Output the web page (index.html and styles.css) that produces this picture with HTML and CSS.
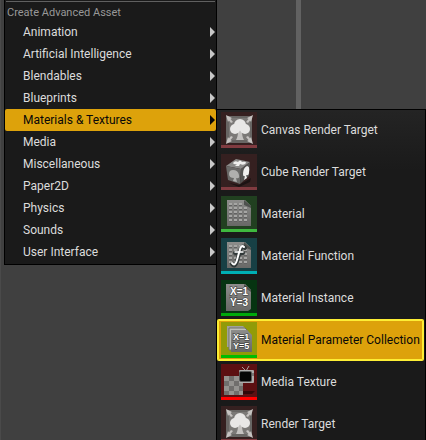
FILE: index.html
```html
<!DOCTYPE html>
<html lang="en">
<head>
<meta charset="utf-8">
<title>Create Advanced Asset</title>
<link rel="stylesheet" href="styles.css">
</head>
<body>
<svg class="defs" aria-hidden="true">
  <defs>
    <linearGradient id="metal" x1="0" y1="0" x2="0" y2="1">
      <stop offset="0" stop-color="#8d8d8b"/><stop offset="1" stop-color="#686866"/>
    </linearGradient>
    <pattern id="dots" x="7" y="6" width="5" height="4" patternUnits="userSpaceOnUse">
      <rect x="1" y="1" width="3" height="2" fill="#a6a6a4"/>
      <rect x="1" y="3" width="3" height="1" fill="#626262"/>
    </pattern>
    <symbol id="target" viewBox="0 0 36 33">
      <rect x="5" y="4" width="26" height="27" fill="#686664"/>
      <rect x="8" y="6" width="21" height="22" fill="#7b7977"/>
      <g fill="#c6c3c1">
        <path d="M5 3L11 6L9.500 7L12 10L10 11L8 8.500L7 10Z"/>
        <path d="M32 3L26 6L27.500 7L25 10L27 11L29 8.500L30 10Z"/>
        <path d="M5 32L11 29L9.500 28L12 25L10 24L8 26.500L7 25Z"/>
        <path d="M32 32L26 29L27.500 28L25 25L27 24L29 26.500L30 25Z"/>
      </g>
      <path d="M17 19H21Q21 25 23 28H15Q17 25 17 19Z" fill="#c4c2c0"/>
      <g fill="#e8e7e6">
        <circle cx="19" cy="13" r="6"/>
        <circle cx="14" cy="17" r="5"/>
        <circle cx="24" cy="17" r="5"/>
      </g>
    </symbol>
    <symbol id="plate" viewBox="0 0 36 33">
      <path d="M6 4H24L30 10V30H6Z" fill="url(#metal)"/>
      <path d="M7 6H22V10H27V26H7Z" fill="url(#dots)"/>
      <path d="M23 4L30 10V12L23 9Z" fill="#4e514e"/>
    </symbol>
  </defs>
</svg>
<main class="desk">
  <nav class="menu" aria-label="Create Advanced Asset">
    <h1 class="heading">Create Advanced Asset</h1>
    <button class="entry">Animation</button>
    <button class="entry">Artificial Intelligence</button>
    <button class="entry">Blendables</button>
    <button class="entry">Blueprints</button>
    <button class="entry open" aria-expanded="true">Materials &amp; Textures</button>
    <button class="entry">Media</button>
    <button class="entry">Miscellaneous</button>
    <button class="entry">Paper2D</button>
    <button class="entry">Physics</button>
    <button class="entry">Sounds</button>
    <button class="entry">User Interface</button>
  </nav>
  <nav class="submenu" aria-label="Materials &amp; Textures">
    <button class="asset"><svg class="icon maroon" viewBox="0 0 36 33"><use href="#target" width="36" height="33"/></svg>Canvas Render Target</button>
    <button class="asset">
      <svg class="icon maroon" viewBox="0 0 36 33">
        <path d="M8 29L18 31L30 24L29 28L18 33Z" fill="#1c1313"/>
        <path d="M5 12L15 5L29 8L20 15Z" fill="#8a8a88"/>
        <path d="M5 12L20 15L19 30L7 26Z" fill="#6a6a68"/>
        <path d="M20 15L29 8L28 22L19 30Z" fill="#545452"/>
        <path d="M12 9Q14 6 17 8Q19 5 21 8Q25 7 25 9Q23 12 19 10L18 12L14 12L16 10Q13 11 12 9Z" fill="#efefed"/>
        <path d="M8 20Q8 16 12 16Q17 16 18 21Q19 25 15 24L16 28L12 27L13 24Q8 24 8 20Z" fill="#b0b0ae"/>
        <path d="M22 20Q22 14 26 12Q29 12 28 18Q28 22 25 21L26 24L23 26L24 22Q22 23 22 20Z" fill="#f0f0ee"/>
      </svg>Cube Render Target</button>
    <button class="asset"><svg class="icon green" viewBox="0 0 36 33"><use href="#plate" width="36" height="33"/></svg>Material</button>
    <button class="asset">
      <svg class="icon teal" viewBox="0 0 36 33">
        <use href="#plate" width="36" height="33"/>
        <g fill="none" stroke-linecap="round">
          <path d="M24 10Q21 6 19 13L16 23Q14 30 11 26M14 15H22" stroke="#303838" stroke-width="4"/>
          <path d="M23 9Q20 6 18.500 13L16 22Q14 29 11 25" stroke="#fff" stroke-width="2"/>
          <path d="M14 14H22" stroke="#fff" stroke-width="1.500"/>
        </g>
      </svg>Material Function</button>
    <button class="asset">
      <svg class="icon forest" viewBox="0 0 36 33">
        <path d="M5 4H24L30 10V29L27 31H5Z" fill="url(#metal)"/>
        <path d="M23 4L30 10V12L23 7Z" fill="#4e514e"/>
        <g class="formula"><text x="9" y="15">X=1</text><text x="9" y="26">Y=3</text></g>
      </svg>Material Instance</button>
    <button class="asset selected">
      <svg class="icon olive" viewBox="0 0 36 33">
        <path d="M6 4H22L25 7V25H6Z" fill="#a0a19a"/>
        <path d="M8 6H24L27 9V28H8Z" fill="#c0c1ba" stroke="#71736c"/>
        <path d="M10 8H26L31 13V30H10Z" fill="url(#metal)"/>
        <g class="formula small"><text x="12" y="18">X=1</text><text x="12" y="27">Y=5</text></g>
      </svg>Material Parameter Collection</button>
    <button class="asset">
      <svg class="icon red" viewBox="0 0 36 33">
        <path d="M20 27H34L31 30H20Z" fill="#300709"/>
        <rect x="3" y="12" width="19" height="19" fill="#706e6c"/>
        <path d="M3 12h5v5h-5zM13 12h5v5h-5zM8 17h5v5h-5zM18 17h4v5h-4zM3 22h5v5h-5zM13 22h5v5h-5zM8 27h5v4h-5zM18 27h4v4h-4z" fill="#94928f"/>
        <path d="M25 7L21 3M25 7L28 2" stroke="#a5a09e" fill="none"/>
        <rect x="18" y="6" width="15" height="13" rx="1" fill="#aeacab"/>
        <rect x="18" y="7" width="13" height="11" rx="2" fill="#555"/>
        <rect x="19" y="8" width="11" height="9" rx="1" fill="#050505"/>
        <path d="M32 9V12" stroke="#444"/>
      </svg>Media Texture</button>
    <button class="asset"><svg class="icon maroon" viewBox="0 0 36 33"><use href="#target" width="36" height="33"/></svg>Render Target</button>
  </nav>
</main>
</body>
</html>
```
FILE: styles.css
```css
* { box-sizing: border-box; }

body {
  margin: 0;
  background: #404040;
  font-family: Roboto, "Liberation Sans", sans-serif;
  font-size: 12px;
  line-height: 22px;
  color: #dcdcdc;
}

.defs { position: absolute; width: 0; height: 0; }

.desk {
  display: flex;
  align-items: flex-start;
  height: 100vh;
  padding-left: 4px;
  overflow: hidden;
  background:
    linear-gradient(#4a4a4a, #4a4a4a) 0 0 / 1px 100% no-repeat,
    linear-gradient(#626262, #626262) 296px 0 / 5px 100% no-repeat;
}

.menu {
  flex: 0 0 213px;
  padding: 1px 0;
  border: solid #000;
  border-width: 0 1px 1px;
  background: #1a1a1a;
}

.heading {
  margin: 0 1px;
  padding: 3px 0 0 1px;
  border-top: 1px solid #606060;
  font-size: 11px;
  font-weight: 400;
  line-height: 16px;
  color: #989898;
}

button {
  display: flex;
  align-items: center;
  width: 100%;
  margin: 0;
  border: 0;
  background: none;
  font: inherit;
  color: inherit;
  text-align: left;
  white-space: nowrap;
}

.entry {
  justify-content: space-between;
  height: 22px;
  padding: 0 1px 0 18px;
}

.entry::after {
  content: "";
  border: solid transparent;
  border-width: 5px 0 5px 5px;
  border-left-color: #c8c8c8;
}

.open { border-radius: 2px; background: #dda20b; color: #080808; }
.open::after { border-left-color: #080808; }

.submenu {
  display: flex;
  flex: 1;
  flex-direction: column;
  gap: 2px;
  min-width: 0;
  margin: 109px 0 0 -1px;
  padding: 0 2px 0 1px;
  border: 1px solid #000;
  background: linear-gradient(#242424, #1a1a1a 60px);
}

.asset {
  flex: none;
  gap: 4px;
  height: 40px;
  padding: 0 3px;
}

.selected {
  border-radius: 1px;
  background: #dda20b;
  box-shadow: inset 0 0 0 1px #fdee35, 0 0 0 1px #fdee35;
  color: #080808;
}

.icon { flex: none; width: 36px; height: 36px; border-bottom: 3px solid; }
.maroon { background: #352020; border-color: #803b40; }
.green { background: #214020; border-color: #3fb83f; }
.teal { background: #174045; border-color: #00aeb5; }
.forest { background: #063411; border-color: #00a90b; }
.olive { background: #929b08; border-color: #00bd00; }
.red { background: #5c1012; border-color: #f00; }

.formula {
  fill: #fff;
  stroke: #333;
  stroke-width: 1px;
  paint-order: stroke;
  font-family: "Liberation Sans", sans-serif;
  font-size: 10px;
  font-weight: 700;
}

.small { font-size: 9px; }
```
